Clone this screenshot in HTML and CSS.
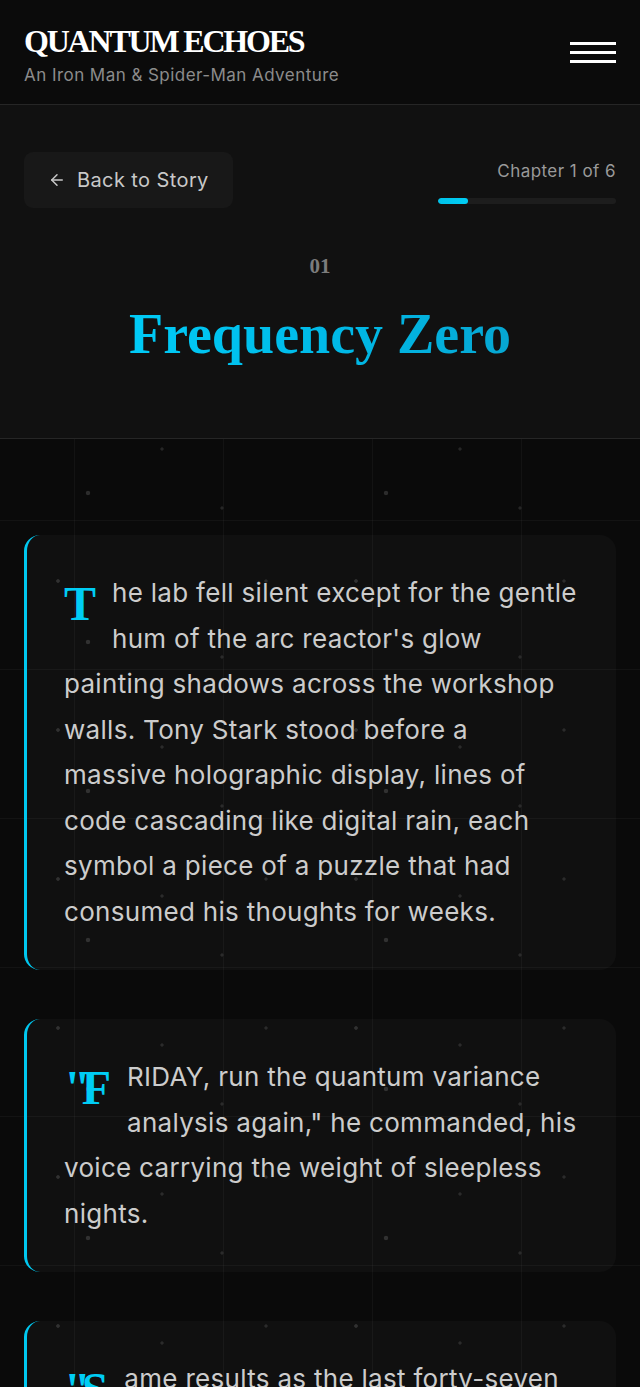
FILE: index.html
```html
<!DOCTYPE html>
<html lang="en">
<head>
<meta charset="utf-8">
<title>Quantum Echoes — Frequency Zero</title>
<link rel="stylesheet" href="styles.css">
</head>
<body>
<header class="site-header">
  <div class="brand">
    <h1 class="brand-title">QUANTUM ECHOES</h1>
    <p class="brand-sub">An Iron Man &amp; Spider-Man Adventure</p>
  </div>
  <button class="menu" aria-label="Menu">
    <span class="menu-line"></span>
    <span class="menu-line"></span>
    <span class="menu-line"></span>
  </button>
</header>

<section class="chapter-head">
  <div class="chapter-top">
    <a class="back" href="#">
      <svg class="back-icon" viewBox="0 0 24 24" width="18" height="18" fill="none" stroke="currentColor" stroke-width="2" stroke-linecap="round" stroke-linejoin="round"><path d="M19 12H5"/><path d="M12 19l-7-7 7-7"/></svg>
      <span>Back to Story</span>
    </a>
    <div class="progress">
      <span class="progress-label">Chapter 1 of 6</span>
      <div class="progress-track"><div class="progress-fill" style="width:16.67%"></div></div>
    </div>
  </div>
  <div class="chapter-num">01</div>
  <h2 class="chapter-title">Frequency Zero</h2>
</section>

<main class="story">
  <article class="para">
    <p><span class="drop">T</span>he lab fell silent except for the gentle hum of the arc reactor's glow painting shadows across the workshop walls. Tony Stark stood before a<br>massive holographic display, lines of code cascading like digital rain, each symbol a piece of a puzzle that had consumed his thoughts for weeks.</p>
  </article>
  <article class="para">
    <p><span class="drop"><span class="q">"</span>F</span>RIDAY, run the quantum variance analysis again," he commanded, his voice carrying the weight of sleepless nights.</p>
  </article>
  <article class="para">
    <p><span class="drop"><span class="q">"</span>S</span>ame results as the last forty-seven attempts, boss," FRIDAY replied. "The frequency keeps collapsing to zero at the same point in the sequence."</p>
  </article>
</main>
</body>
</html>
```

FILE: styles.css
```css
* { box-sizing: border-box; }

html, body { margin: 0; padding: 0; }

body {
  font-family: Inter, "Noto Sans", sans-serif;
  color: #cfcfcf;
  background-color: #0a0a0a;
  background-image:
    radial-gradient(circle at 58px 134px, #2c2c2c 1.4px, transparent 2.2px),
    radial-gradient(circle at 88px 46px, #2c2c2c 1.8px, transparent 2.6px),
    radial-gradient(circle at 162px 2px, #262626 1.2px, transparent 2px),
    radial-gradient(circle at 222px 61px, #262626 1.2px, transparent 2px),
    radial-gradient(circle at 266px 134px, #262626 1.2px, transparent 2px),
    linear-gradient(90deg, transparent 74px, rgba(255,255,255,0.035) 74px, rgba(255,255,255,0.035) 75px, transparent 75px),
    linear-gradient(180deg, transparent 73px, rgba(255,255,255,0.035) 73px, rgba(255,255,255,0.035) 74px, transparent 74px);
  background-size: 298px 149px, 298px 149px, 298px 149px, 298px 149px, 298px 149px, 149px 149px, 149px 149px;
}

/* Header */
.site-header {
  height: 105px;
  padding: 0 24px;
  display: flex;
  align-items: center;
  justify-content: space-between;
  background: #0b0b0b;
  border-bottom: 1px solid #262626;
}

.brand {
  padding-top: 4px;
}

.brand-title {
  margin: 0;
  font-family: "Liberation Serif", "DejaVu Serif", serif;
  font-weight: 700;
  font-size: 32px;
  letter-spacing: -2.2px;
  line-height: 36px;
  color: #ffffff;
}

.brand-sub {
  margin: 5px 0 0;
  font-size: 17px;
  line-height: 22px;
  letter-spacing: 0.45px;
  color: #8c8c8c;
}

.menu {
  background: none;
  border: 0;
  padding: 0;
  width: 46px;
  display: flex;
  flex-direction: column;
  gap: 6px;
  cursor: pointer;
}

.menu-line {
  display: block;
  height: 3px;
  width: 46px;
  background: #ffffff;
}

/* Chapter header */
.chapter-head {
  background: #111111;
  border-bottom: 1px solid #262626;
  padding: 47px 24px 70px;
  text-align: center;
}

.chapter-top {
  display: flex;
  justify-content: space-between;
  align-items: flex-start;
}

.back {
  display: flex;
  align-items: center;
  gap: 11px;
  height: 56px;
  padding: 0 24px 0 24px;
  border-radius: 9px;
  background: #181818;
  color: #c8c8c8;
  text-decoration: none;
  font-size: 20px;
  letter-spacing: 0.4px;
}

.back-icon { flex: none; }

.progress {
  width: 178px;
  padding-top: 7px;
  display: flex;
  flex-direction: column;
  align-items: flex-end;
}

.progress-label {
  font-size: 17px;
  line-height: 24px;
  letter-spacing: 0.45px;
  color: #9a9a9a;
}

.progress-track {
  margin-top: 15px;
  width: 100%;
  height: 6px;
  border-radius: 3px;
  background: #1d1d1d;
  overflow: hidden;
}

.progress-fill {
  height: 100%;
  border-radius: 3px;
  background: linear-gradient(90deg, #00c2ea, #00cef5);
}

.chapter-num {
  margin-top: 46px;
  font-family: "Liberation Serif", "DejaVu Serif", serif;
  font-weight: 700;
  font-size: 21px;
  line-height: 24px;
  color: #7c7c7c;
}

.chapter-title {
  margin: 23px 0 0;
  font-family: "Liberation Serif", "DejaVu Serif", serif;
  font-weight: 700;
  font-size: 56px;
  line-height: 67px;
  background: linear-gradient(90deg, #00d4ff 0%, #00b8e6 55%, #0a9cc6 100%);
  -webkit-background-clip: text;
  background-clip: text;
  color: transparent;
}

/* Story */
.story {
  padding: 96px 24px 48px;
}

.para {
  margin-bottom: 49px;
  padding: 35px 37px 36px 37px;
  border-radius: 16px;
  border-left: 3px solid #00c8f0;
  background: rgba(255, 255, 255, 0.028);
}

.para p {
  margin: 0;
  font-size: 26px;
  line-height: 45.5px;
  letter-spacing: 0.3px;
  color: #cccccc;
}

.drop {
  float: left;
  margin: 10px 16px 0 0;
  font-family: "Liberation Serif", "DejaVu Serif", serif;
  font-weight: 700;
  font-size: 48px;
  line-height: 48px;
  letter-spacing: 0;
  color: #00cdf5;
}

.q {
  margin-right: -9px;
}
```
